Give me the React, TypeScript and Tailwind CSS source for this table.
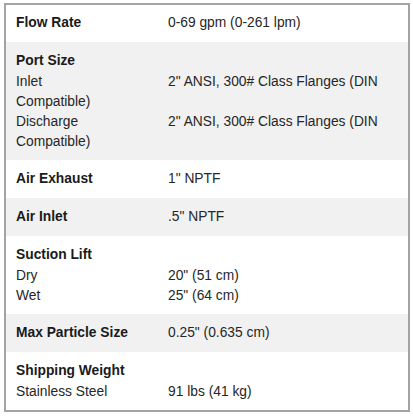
type SubRow = { label: string; value: string; wrap?: string };

type Spec = {
  title: string;
  value?: string;
  rows?: SubRow[];
};

const specs: Spec[] = [
  { title: "Flow Rate", value: "0-69 gpm (0-261 lpm)" },
  {
    title: "Port Size",
    rows: [
      { label: "Inlet", value: '2" ANSI, 300# Class Flanges (DIN', wrap: "Compatible)" },
      { label: "Discharge", value: '2" ANSI, 300# Class Flanges (DIN', wrap: "Compatible)" },
    ],
  },
  { title: "Air Exhaust", value: '1" NPTF' },
  { title: "Air Inlet", value: '.5" NPTF' },
  {
    title: "Suction Lift",
    rows: [
      { label: "Dry", value: '20" (51 cm)' },
      { label: "Wet", value: '25" (64 cm)' },
    ],
  },
  { title: "Max Particle Size", value: '0.25" (0.635 cm)' },
  {
    title: "Shipping Weight",
    rows: [{ label: "Stainless Steel", value: "91 lbs (41 kg)" }],
  },
];

function SpecBlock({ spec, shaded, first }: { spec: Spec; shaded: boolean; first: boolean }) {
  return (
    <div
      className={`px-[10px] pb-2 ${first ? "pt-[7px]" : "pt-2"} ${shaded ? "bg-[#f1f1f1]" : "bg-white"}`}
    >
      <div className="flex leading-[22px]">
        <span className="w-[152px] shrink-0 font-bold text-[#1a1a1a]">{spec.title}</span>
        {spec.value && <span>{spec.value}</span>}
      </div>
      {spec.rows?.map((row) => (
        <div key={row.label} className="leading-[20px]">
          <div className="flex">
            <span className="w-[152px] shrink-0">{row.label}</span>
            <span>{row.value}</span>
          </div>
          {row.wrap && <div>{row.wrap}</div>}
        </div>
      ))}
    </div>
  );
}

export default function App() {
  return (
    <div className="w-[413px] h-[417px] bg-white pl-1 pt-[3px] font-['Liberation_Sans',Arial,sans-serif] text-[13.8px] text-[#262626]">
      <div className="w-[406px] border-2 border-[#a3a3a3]">
        {specs.map((spec, i) => (
          <SpecBlock key={spec.title} spec={spec} shaded={i % 2 === 1} first={i === 0} />
        ))}
      </div>
    </div>
  );
}
